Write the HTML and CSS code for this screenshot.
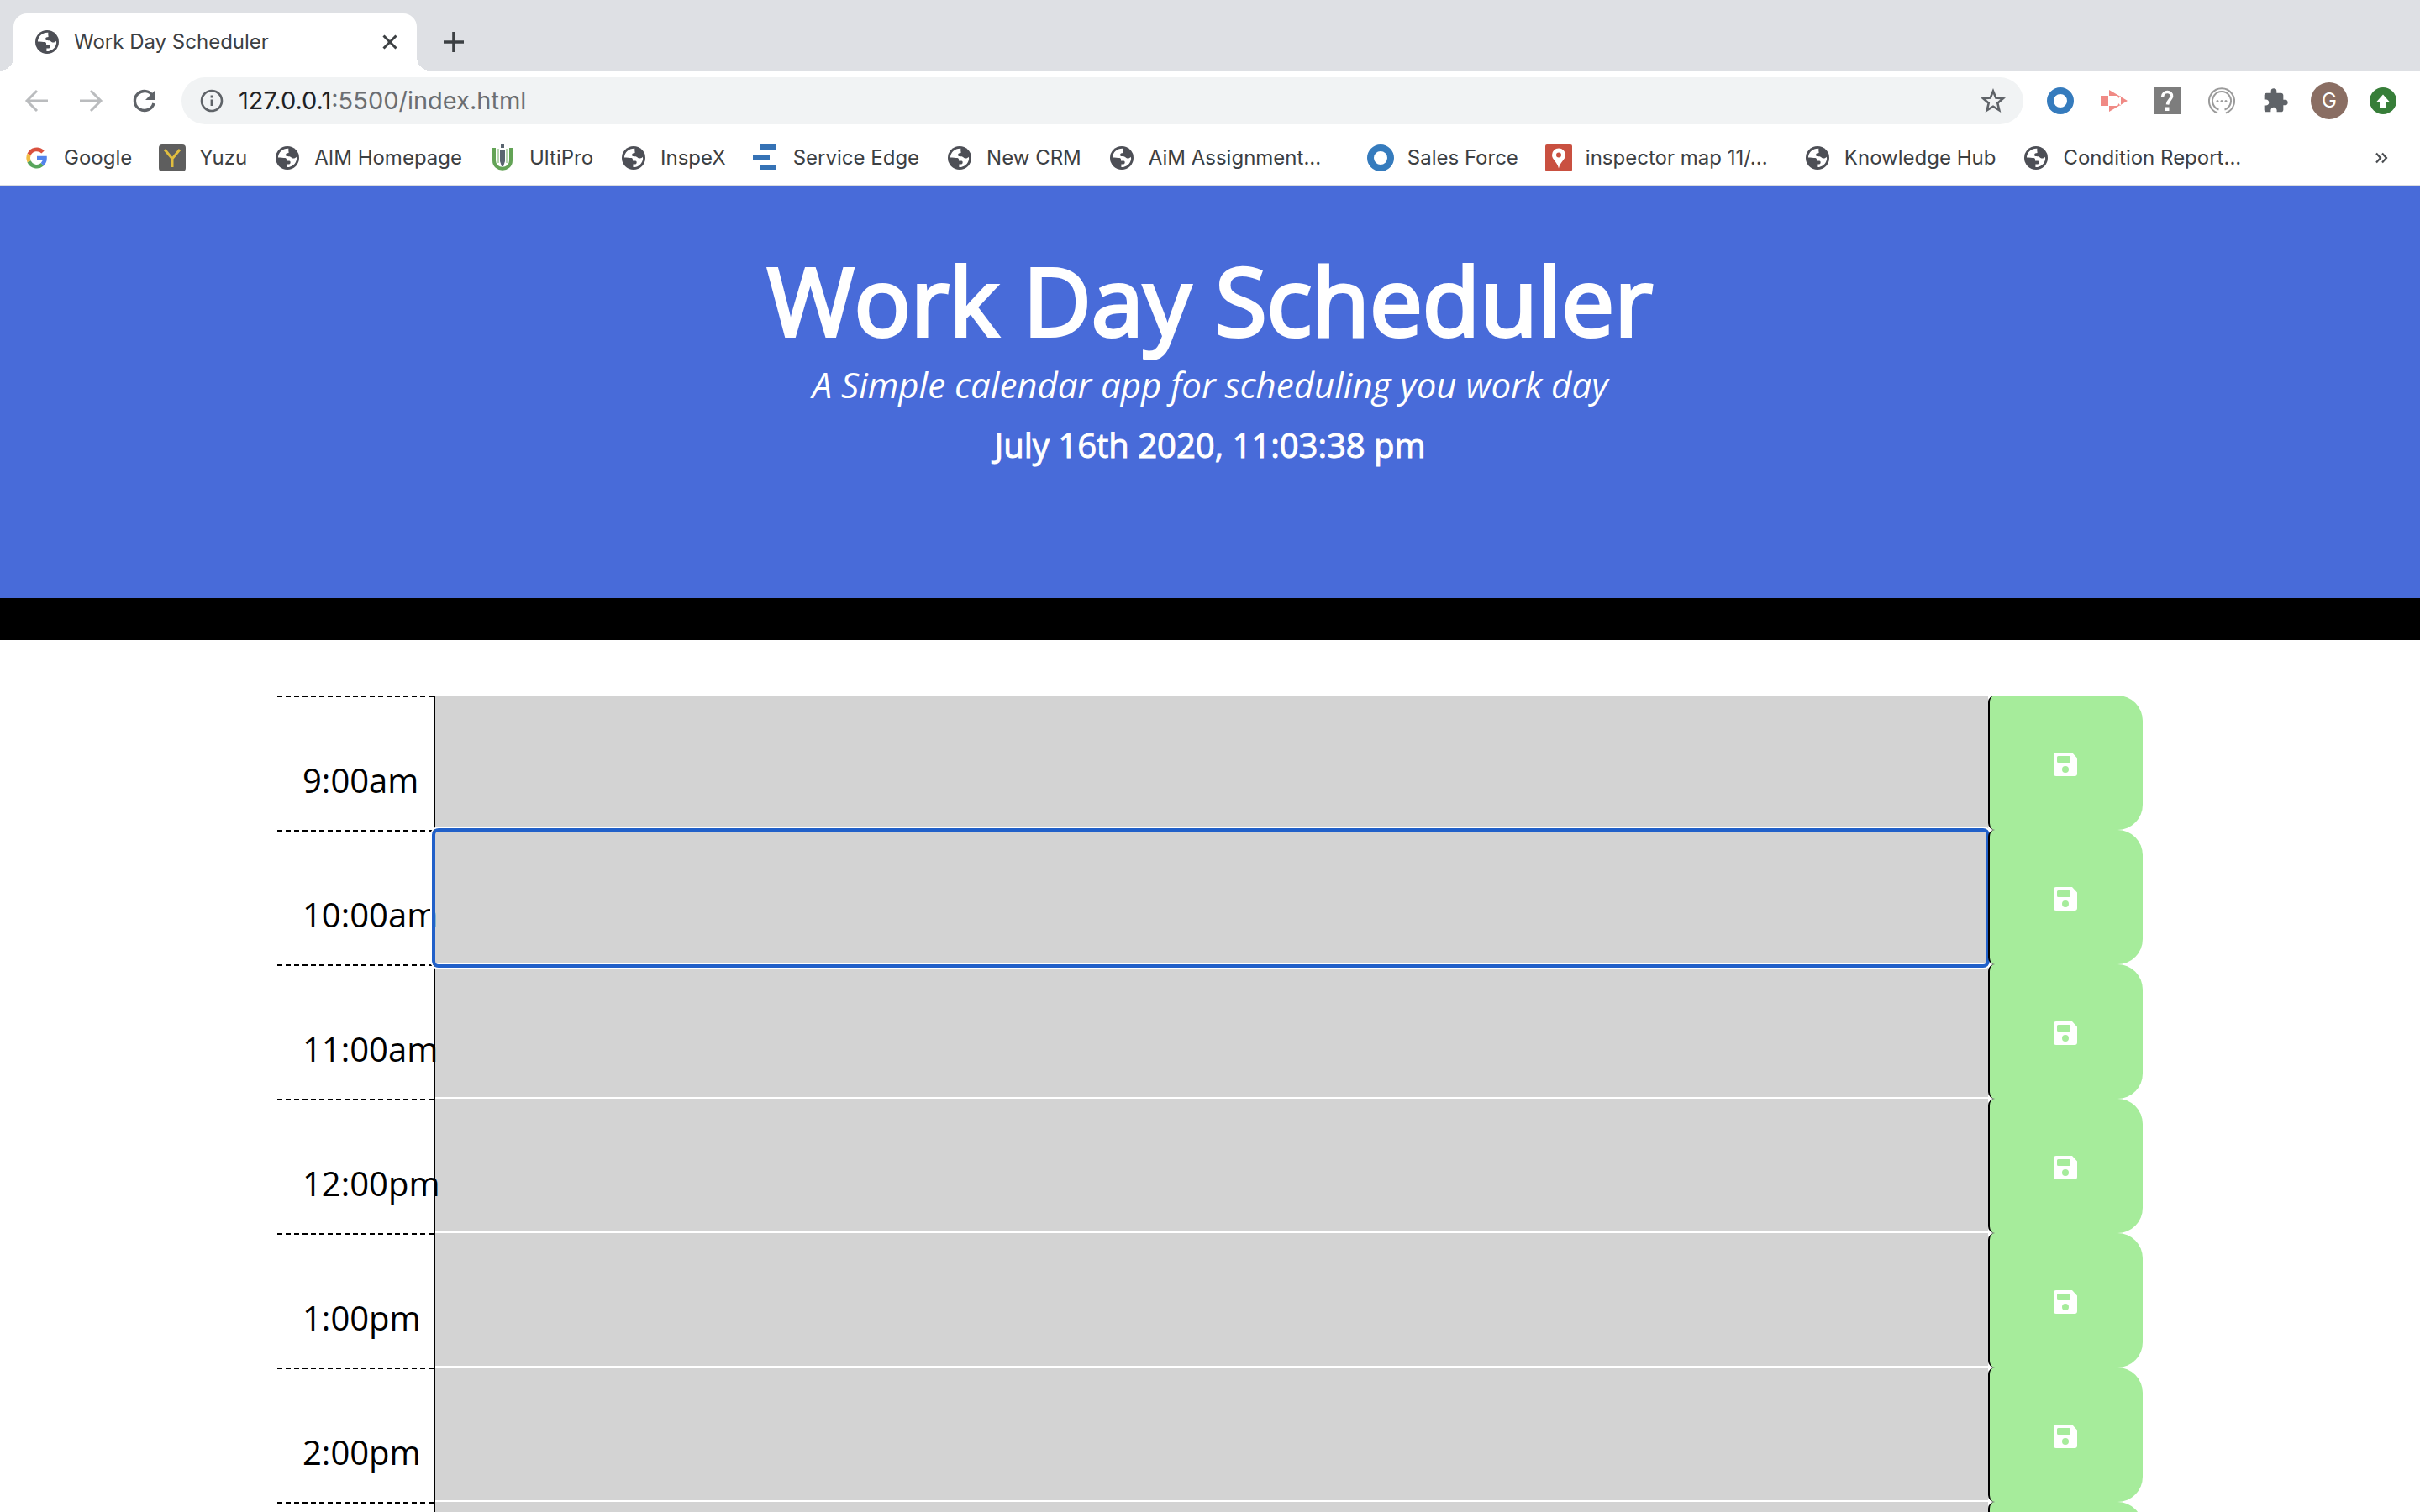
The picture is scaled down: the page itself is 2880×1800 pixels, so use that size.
FILE: index.html
```html
<!DOCTYPE html>
<html lang="en">
<head>
<meta charset="utf-8">
<title>Work Day Scheduler</title>
<link rel="stylesheet" href="styles.css">
</head>
<body>
<svg class="defs" aria-hidden="true">
  <symbol id="globe" viewBox="0 0 32 32">
    <circle cx="16" cy="16" r="14" fill="#4d4f56"/>
    <path fill="#fff" d="M17.500 4.800C11 4.300 5.300 9 4.900 15.500c3.500.3 6.300.2 8.600.6 1.600.4 1.700 2 1.500 3.400h3.300c1.200 0 1.500 1.200 1.300 2.400-.3 1.500-2 1.700-4.200 1.700v3.500c5.500.3 11-3.700 11.700-9.800.1-1-.1-2-.3-2.600-1 1.300-2.500 2.100-4.300 1.800-1.800-.4-2.400-2-3.800-2.300-1.500-.3-4.400.3-4.600-1.500-.1-2 1.500-2.500 3.500-2.600.1-2.200-.8-3.300-.1-5.300z"/>
  </symbol>
  <symbol id="ring" viewBox="0 0 32 32">
    <circle cx="16" cy="16" r="12" fill="none" stroke="#357bbd" stroke-width="8"/>
  </symbol>
  <symbol id="save" viewBox="0 0 28 28">
    <path fill="#fff" fill-rule="evenodd" d="M3 0h19l6 6.500V25a3 3 0 0 1-3 3H3a3 3 0 0 1-3-3V3a3 3 0 0 1 3-3zm2.500 4A1.500 1.500 0 0 0 4 5.500v5A1.500 1.500 0 0 0 5.500 12h13a1.500 1.500 0 0 0 1.500-1.500v-5A1.500 1.500 0 0 0 18.500 4zM14 16a4 4 0 1 0 0 8 4 4 0 0 0 0-8z"/>
  </symbol>
</svg>

<div class="browser">
  <div class="tabstrip">
    <div class="tab">
      <svg class="icon"><use href="#globe"/></svg>
      <span class="tab-title">Work Day Scheduler</span>
      <button class="plain" aria-label="Close tab"><svg class="icon-small" viewBox="0 0 24 24"><path d="M4.500 4.500l15 15M19.500 4.500l-15 15" stroke="#3c4043" stroke-width="3" fill="none"/></svg></button>
    </div>
    <button class="plain" aria-label="New tab"><svg class="icon-small" viewBox="0 0 24 24"><path d="M12 0v24M0 12h24" stroke="#3c4043" stroke-width="3.600" fill="none"/></svg></button>
  </div>

  <div class="toolbar">
    <div class="nav">
      <button class="plain" aria-label="Back"><svg class="icon" viewBox="0 0 32 32"><path d="M29 16H4M16 4L4 16l12 12" stroke="#babcbe" stroke-width="3" fill="none"/></svg></button>
      <button class="plain" aria-label="Forward"><svg class="icon" viewBox="0 0 32 32"><path d="M3 16h25M16 4l12 12-12 12" stroke="#babcbe" stroke-width="3" fill="none"/></svg></button>
      <button class="plain" aria-label="Reload"><svg class="icon" viewBox="0 0 32 32"><path d="M26 10.500A11.500 11.500 0 1 0 27 19" stroke="#5f6368" stroke-width="3.400" fill="none"/><path d="M29 3v12H17z" fill="#5f6368"/></svg></button>
    </div>
    <div class="address">
      <svg class="icon" viewBox="0 0 32 32"><circle cx="16" cy="16" r="12" stroke="#5f6368" stroke-width="2.600" fill="none"/><path d="M16 14.500V22M16 9.500v3" stroke="#5f6368" stroke-width="2.800"/></svg>
      <span class="url"><span class="host">127.0.0.1</span>:5500/index.html</span>
      <button class="plain" aria-label="Bookmark this page"><svg class="icon" viewBox="0 0 32 32"><path d="M16 4.500l3.300 8 8.500.7-6.500 5.600 2 8.400-7.300-4.500-7.300 4.500 2-8.400-6.500-5.600 8.500-.7z" stroke="#5f6368" stroke-width="2.600" fill="none"/></svg></button>
    </div>
    <div class="extensions">
      <svg class="icon"><use href="#ring"/></svg>
      <svg class="icon" viewBox="0 0 32 32"><path fill="#f08a85" fill-rule="evenodd" d="M0 10h9v12H0zM10 3l22 13-22 13v-7h9c1.500 0 2-1 2-3l3 3V10l-3 3c0-2-.5-3-2-3h-9z"/></svg>
      <svg class="icon" viewBox="0 0 32 32"><path fill="#7d7d7d" d="M0 0h32v32H0z"/><path d="M9.500 11.500C10 3.500 21 4 20.500 10.500 20 15 16 14.500 15.500 20.500" stroke="#fff" stroke-width="3.600" fill="none"/><path d="M12.500 23.500h5V28h-5z" fill="#fff"/></svg>
      <svg class="icon" viewBox="0 0 32 32"><g fill="none" stroke="#9b9b9b" stroke-width="2"><path d="M11 30.500a15 15 0 1 1 10 0"/><path d="M12.500 26.500a11 11 0 1 1 7 0"/></g><g fill="#9b9b9b"><circle cx="11" cy="16.500" r="1.500"/><circle cx="16" cy="16.500" r="1.500"/><circle cx="21" cy="16.500" r="1.500"/></g></svg>
      <svg class="icon" viewBox="0 0 24 24"><path fill="#5f6368" d="M20.500 11H19V7c0-1.100-.9-2-2-2h-4V3.500a2.500 2.500 0 0 0-5 0V5H4c-1.100 0-2 .9-2 2v3.800h1.500c1.500 0 2.700 1.200 2.700 2.700S5 16.200 3.500 16.200H2V20c0 1.100.9 2 2 2h3.800v-1.500c0-1.500 1.200-2.700 2.700-2.700s2.700 1.200 2.700 2.700V22H17c1.100 0 2-.9 2-2v-4h1.500a2.500 2.500 0 0 0 0-5z"/></svg>
      <span class="avatar">G</span>
      <svg class="icon" viewBox="0 0 32 32"><circle cx="16" cy="16" r="16" fill="#377e39"/><path fill="#fff" d="M16 8.500l8 9h-4V24h-8v-6.500H8z"/></svg>
    </div>
  </div>

  <nav class="bookmarks" aria-label="Bookmarks">
    <a href="#"><svg class="icon" viewBox="0 0 32 32"><g fill="none" stroke-width="4.600"><path stroke="#d9513f" d="M6.600 11.800A10 10 0 0 1 23 9"/><path stroke="#f2bc42" d="M6.600 11.800a10 10 0 0 0 0 8.400"/><path stroke="#58a55c" d="M6.600 20.200A10 10 0 0 0 22.300 23.700"/><path stroke="#5383ec" d="M22.300 23.700A10 10 0 0 0 25.500 16H16"/></g></svg>Google</a>
    <a href="#"><svg class="icon" viewBox="0 0 32 32"><rect width="32" height="32" rx="4" fill="#5e5e5e"/><path d="M7 6l9 11 9-11M16 16v11" stroke="#e0bd3f" stroke-width="3" fill="none"/></svg>Yuzu</a>
    <a href="#"><svg class="icon"><use href="#globe"/></svg>AIM Homepage</a>
    <a href="#"><svg class="icon" viewBox="0 0 32 32"><path d="M6 4v15c0 13 20 13 20 0V4" fill="none" stroke="#63a356" stroke-width="4"/><path d="M11 5v17M21 5v17" stroke="#9ec796" stroke-width="1.500"/><path d="M14 0h4v4h-4zM13 6h6v14l-2 6h-2l-2-6z" fill="#5a6570"/></svg>UltiPro</a>
    <a href="#"><svg class="icon"><use href="#globe"/></svg>InspeX</a>
    <a href="#"><svg class="icon" viewBox="0 0 32 32"><path fill="#3572b5" d="M8 0h20v6H8zM0 12h20v6H0zM8 24h20v6H8z"/></svg>Service Edge</a>
    <a href="#"><svg class="icon"><use href="#globe"/></svg>New CRM</a>
    <a href="#"><svg class="icon"><use href="#globe"/></svg><span class="clipped">AiM Assignment...</span></a>
    <a href="#"><svg class="icon"><use href="#ring"/></svg>Sales Force</a>
    <a href="#"><svg class="icon" viewBox="0 0 32 32"><rect width="32" height="32" rx="2" fill="#c95040"/><path fill="#fff" fill-rule="evenodd" d="M16 4.500a8 8 0 0 0-8 8C8 18 14 20 16 28.500 18 20 24 18 24 12.500a8 8 0 0 0-8-8zM16 9.500a3 3 0 1 1 0 6 3 3 0 0 1 0-6z"/></svg><span class="clipped">inspector map 11/...</span></a>
    <a href="#"><svg class="icon"><use href="#globe"/></svg>Knowledge Hub</a>
    <a href="#"><svg class="icon"><use href="#globe"/></svg><span class="clipped">Condition Report...</span></a>
    <button class="plain more" aria-label="More bookmarks"><svg class="icon-tiny" viewBox="0 0 16 16"><path d="M2 2.500L7 8l-5 5.500M9 2.500L14 8l-5 5.500" stroke="#4a4d51" stroke-width="2.200" fill="none"/></svg></button>
  </nav>
</div>

<header class="hero">
  <h1>Work Day Scheduler</h1>
  <p class="lead">A Simple calendar app for scheduling you work day</p>
  <p class="now">July 16th 2020, 11:03:38 pm</p>
</header>

<main class="schedule">
  <div class="row">
    <label class="hour" for="h9">9:00am</label>
    <div class="entry"><textarea id="h9"></textarea></div>
    <button class="save" aria-label="Save 9:00am"><svg class="save-icon"><use href="#save"/></svg></button>
  </div>
  <div class="row">
    <label class="hour" for="h10">10:00am</label>
    <div class="entry entry-active"><textarea id="h10"></textarea></div>
    <button class="save" aria-label="Save 10:00am"><svg class="save-icon"><use href="#save"/></svg></button>
  </div>
  <div class="row">
    <label class="hour" for="h11">11:00am</label>
    <div class="entry"><textarea id="h11"></textarea></div>
    <button class="save" aria-label="Save 11:00am"><svg class="save-icon"><use href="#save"/></svg></button>
  </div>
  <div class="row">
    <label class="hour" for="h12">12:00pm</label>
    <div class="entry"><textarea id="h12"></textarea></div>
    <button class="save" aria-label="Save 12:00pm"><svg class="save-icon"><use href="#save"/></svg></button>
  </div>
  <div class="row">
    <label class="hour" for="h13">1:00pm</label>
    <div class="entry"><textarea id="h13"></textarea></div>
    <button class="save" aria-label="Save 1:00pm"><svg class="save-icon"><use href="#save"/></svg></button>
  </div>
  <div class="row">
    <label class="hour" for="h14">2:00pm</label>
    <div class="entry"><textarea id="h14"></textarea></div>
    <button class="save" aria-label="Save 2:00pm"><svg class="save-icon"><use href="#save"/></svg></button>
  </div>
  <div class="row">
    <label class="hour" for="h15">3:00pm</label>
    <div class="entry"><textarea id="h15"></textarea></div>
    <button class="save" aria-label="Save 3:00pm"><svg class="save-icon"><use href="#save"/></svg></button>
  </div>
</main>
</body>
</html>
```
FILE: styles.css
```css
* {
  box-sizing: border-box;
}

html {
  height: 100%;
}

/* The window shows one screen; the rest of the day lies below the fold. */
body {
  height: 100%;
  margin: 0;
  overflow: hidden;
  background: #fff;
  color: #000;
  font-family: "Open Sans", "Noto Sans", sans-serif;
  font-size: 40px;
  line-height: 60px;
}

.defs {
  display: none;
}

.icon {
  display: block;
  flex: none;
  width: 32px;
  height: 32px;
}

.icon-small {
  display: block;
  width: 24px;
  height: 24px;
}

.icon-tiny {
  display: block;
  width: 16px;
  height: 16px;
}

.plain {
  padding: 0;
  border: 0;
  background: none;
}

/* Browser window */

.browser {
  border-bottom: 2px solid #dadce0;
  font-family: Inter, "Liberation Sans", sans-serif;
  font-size: 24px;
  line-height: 32px;
  color: #3c4043;
}

.tabstrip {
  display: flex;
  align-items: center;
  gap: 32px;
  padding: 16px 16px 0;
  background: #dee0e4;
}

.tab {
  position: relative;
  display: flex;
  align-items: center;
  gap: 16px;
  width: 480px;
  height: 68px;
  padding: 0 20px 0 24px;
  border-radius: 16px 16px 0 0;
  background: #fff;
}

/* Flared feet where the tab meets the toolbar */
.tab::before,
.tab::after {
  content: "";
  position: absolute;
  bottom: 0;
  width: 16px;
  height: 16px;
}

.tab::before {
  right: 100%;
  background: radial-gradient(circle at 0 0, transparent 16px, #fff 16px);
}

.tab::after {
  left: 100%;
  background: radial-gradient(circle at 100% 0, transparent 16px, #fff 16px);
}

.tab-title {
  flex: 1;
}

.toolbar {
  display: flex;
  align-items: center;
  gap: 28px;
  height: 72px;
  padding: 0 28px;
}

.nav {
  display: flex;
  gap: 32px;
}

.address {
  display: flex;
  flex: 1;
  align-items: center;
  gap: 16px;
  height: 56px;
  padding: 0 20px;
  border-radius: 28px;
  background: #f1f3f4;
}

.url {
  flex: 1;
  font-size: 29px;
  color: #6b6e72;
}

.host {
  color: #202124;
}

.extensions {
  display: flex;
  align-items: center;
  gap: 32px;
}

.avatar {
  width: 44px;
  height: 44px;
  margin: 0 -6px;
  border-radius: 50%;
  background: #8a6e63;
  color: #fff;
  line-height: 44px;
  text-align: center;
}

.bookmarks {
  display: flex;
  align-items: center;
  gap: 32px;
  height: 64px;
  padding: 0 38px 0 28px;
  white-space: nowrap;
}

.bookmarks a {
  display: flex;
  align-items: center;
  gap: 16px;
  color: inherit;
  text-decoration: none;
}

.clipped {
  min-width: 228px;
}

.more {
  margin-left: auto;
}

/* Page header */

.hero {
  padding: 64px 32px 152px;
  border-bottom: 50px solid #000;
  background: #486bd9;
  color: #fff;
  text-align: center;
}

.hero h1 {
  margin: 0;
  font-size: 112px;
  font-weight: 400;
  line-height: 142px;
  -webkit-text-stroke: 4px #fff;
}

.hero p {
  margin: 0 0 12px;
}

.hero .lead {
  font-size: 42px;
  font-style: italic;
}

.hero .now {
  margin: 0;
  -webkit-text-stroke: 1px #fff;
}

/* Hour rows */

.schedule {
  max-width: 2220px;
  margin: 66px auto 0;
}

.row {
  display: flex;
  height: 160px;
}

.hour {
  position: relative;
  z-index: 1;
  width: 186px;
  padding: 69px 0 0 30px;
  border-top: 2px dashed #000;
}

.entry {
  position: relative;
  flex: 1;
  border-left: 2px solid #000;
}

.entry textarea {
  display: block;
  width: 100%;
  height: 100%;
  padding: 8px;
  border: 0;
  border-bottom: 2px solid #fff;
  background: #d3d3d3;
  font: inherit;
  resize: none;
  outline: 0;
}

/* Focus ring, drawn over the neighbouring rows */
.entry-active::after {
  content: "";
  position: absolute;
  z-index: 2;
  inset: -2px -2px -4px -4px;
  border: 4px solid #2160c9;
  border-radius: 8px;
  box-shadow: 0 0 0 2px #fff;
  pointer-events: none;
}

.save {
  position: relative;
  z-index: 3;
  display: grid;
  place-items: center;
  width: 184px;
  padding: 4px 2px 0 0;
  border: 0;
  border-left: 2px solid #000;
  border-radius: 8px 30px 30px 8px;
  background: #a6ec9b;
}

.save-icon {
  display: block;
  width: 28px;
  height: 28px;
}
```
